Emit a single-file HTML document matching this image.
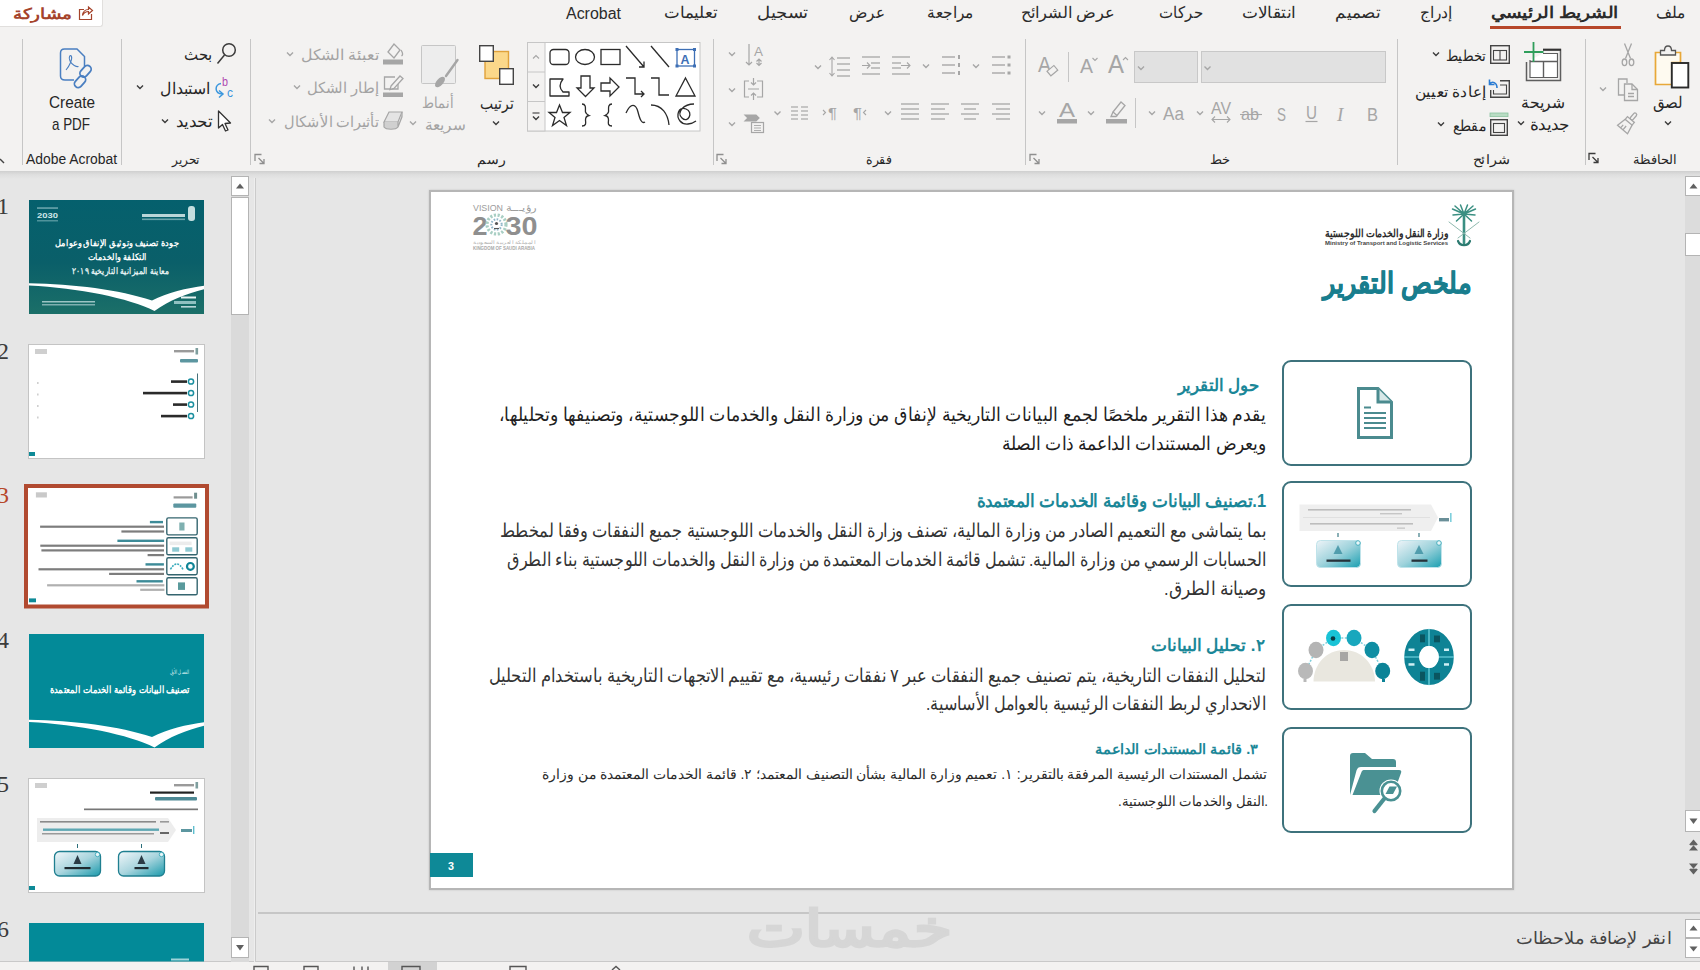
<!DOCTYPE html>
<html lang="ar"><head><meta charset="utf-8"><title>PowerPoint</title>
<style>
html,body{margin:0;padding:0}
body{width:1700px;height:970px;position:relative;overflow:hidden;background:#e6e6e6;font-family:"Liberation Sans",sans-serif;color:#262626}
div,svg{position:absolute;box-sizing:border-box}
svg{overflow:visible}
svg text{font-family:"Liberation Sans",sans-serif;white-space:pre}
.sep{width:1px;background:#c6c6c6}
.sec{left:0;top:0;width:0;height:0}
</style></head><body>
<!-- s_frame -->
<div class="sec" id="frame">
<div style="left:0px;top:0px;width:1700px;height:171px;background:#f3f2f1"></div>
<div style="left:0px;top:171px;width:1700px;height:8px;background:linear-gradient(#cfcfcf,#dedede 45%,#e6e6e6)"></div>
<div style="left:0px;top:961px;width:1700px;height:9px;background:#f3f2f1;border-top:1px solid #c9c9c9"></div>
</div>
<!-- s_tabs -->
<div class="sec" id="tabs">
<div style="left:0px;top:0px;width:103px;height:27px;background:#fff;border:1px solid #e1dfdd;border-left:none;border-top:none;border-radius:0 0 3px 0"></div>
<svg style="left:0px;top:0px" width="1700" height="32" viewBox="0 0 1700 32" ><text x="72" y="19" direction="rtl" font-size="15" fill="#a5432b" font-weight="bold" textLength="59" lengthAdjust="spacingAndGlyphs">مشاركة</text><g fill="none" stroke="#a5432b" stroke-width="1.2"><path d="M84 9.5H79.5V19.5H91.5V14"/><path d="M82.5 15.5C83 11.5 85.5 9.5 88.5 9.5V7L92.5 10.5L88.5 14V11.5C86 11.5 84 12.5 82.5 15.5Z"/></g><text x="1686" y="18" direction="rtl" font-size="15.5" fill="#2b2b2b" textLength="30" lengthAdjust="spacingAndGlyphs">ملف</text><text x="1618" y="18" direction="rtl" font-size="15.5" fill="#2b2b2b" font-weight="bold" textLength="127" lengthAdjust="spacingAndGlyphs">الشريط الرئيسي</text><text x="1452" y="18" direction="rtl" font-size="15.5" fill="#2b2b2b" textLength="32" lengthAdjust="spacingAndGlyphs">إدراج</text><text x="1380" y="18" direction="rtl" font-size="15.5" fill="#2b2b2b" textLength="45" lengthAdjust="spacingAndGlyphs">تصميم</text><text x="1295" y="18" direction="rtl" font-size="15.5" fill="#2b2b2b" textLength="53" lengthAdjust="spacingAndGlyphs">انتقالات</text><text x="1203" y="18" direction="rtl" font-size="15.5" fill="#2b2b2b" textLength="44" lengthAdjust="spacingAndGlyphs">حركات</text><text x="1115" y="18" direction="rtl" font-size="15.5" fill="#2b2b2b" textLength="94" lengthAdjust="spacingAndGlyphs">عرض الشرائح</text><text x="974" y="18" direction="rtl" font-size="15.5" fill="#2b2b2b" textLength="47" lengthAdjust="spacingAndGlyphs">مراجعة</text><text x="885" y="18" direction="rtl" font-size="15.5" fill="#2b2b2b" textLength="36" lengthAdjust="spacingAndGlyphs">عرض</text><text x="808" y="18" direction="rtl" font-size="15.5" fill="#2b2b2b" textLength="51" lengthAdjust="spacingAndGlyphs">تسجيل</text><text x="717" y="18" direction="rtl" font-size="15.5" fill="#2b2b2b" textLength="53" lengthAdjust="spacingAndGlyphs">تعليمات</text><text x="566" y="19" font-size="16" fill="#2b2b2b" textLength="55" lengthAdjust="spacingAndGlyphs">Acrobat</text></svg>
<div style="left:1490px;top:26px;width:131px;height:3px;background:#b7472a"></div>
</div>
<!-- s_ribbon -->
<div class="sec" id="ribbon">
<div class="sep" style="left:22px;top:39px;width:1px;height:126px;"></div>
<div class="sep" style="left:121px;top:39px;width:1px;height:126px;"></div>
<div class="sep" style="left:250px;top:39px;width:1px;height:126px;"></div>
<div class="sep" style="left:713px;top:39px;width:1px;height:126px;"></div>
<div class="sep" style="left:1025px;top:39px;width:1px;height:126px;"></div>
<div class="sep" style="left:1397px;top:39px;width:1px;height:126px;"></div>
<div class="sep" style="left:1585px;top:39px;width:1px;height:126px;"></div>
<svg style="left:0px;top:30px" width="1700" height="140" viewBox="0 30 1700 140" ><g id="clipboard"><g fill="none" stroke-width="1.7"><path d="M1660 52.5H1655.500V84.500H1672V62.500H1680.500V52.500H1676" stroke="#e8a838" fill="#fefaf0"/><path d="M1660.500 55V50.500H1664.500C1664.500 44.500 1671.500 44.500 1671.500 50.500H1675.500V55Z" stroke="#555" fill="#f3f2f1" stroke-width="1.3"/><rect x="1671.8" y="63" width="16.5" height="24.5" fill="#fff" stroke="#2b2b2b" stroke-width="1.9"/></g><text x="1683" y="108" direction="rtl" font-size="15.5" fill="#262626" textLength="30" lengthAdjust="spacingAndGlyphs">لصق</text><path d="M1665 121.5L1668 124.5L1671 121.5" fill="none" stroke="#3b3b3b" stroke-width="1.4"/><g fill="none" stroke="#a6a6a6" stroke-width="1.3"><path d="M1624.500 43.500L1630.500 58.500M1631.500 43.500L1625.500 58.500"/><ellipse cx="1624.500" cy="62.300" rx="2.300" ry="3.300"/><ellipse cx="1631.500" cy="62.300" rx="2.300" ry="3.300"/></g><g fill="none" stroke="#a6a6a6" stroke-width="1.3"><path d="M1624 95H1618.5V79H1627V83"/><path d="M1624.5 84H1632L1637.5 89.5V100.5H1624.5Z" fill="#f3f2f1"/><path d="M1632 84V89.5H1637.5M1628 93.5H1634M1628 96.5H1634"/></g><path d="M1600 87.5L1603 90.5L1606 87.5" fill="none" stroke="#a6a6a6" stroke-width="1.4"/><g fill="none" stroke="#a6a6a6" stroke-width="1.3" transform="rotate(40 1628 123)"><rect x="1626.300" y="110.500" width="3.400" height="8" rx="1.600"/><rect x="1623.500" y="118.500" width="9" height="3.500" fill="#f3f2f1"/><path d="M1623.500 122L1621.500 131.500H1634.500L1632.500 122M1625.500 131.500V127.500M1628.500 131.500V126.500"/></g><g fill="none" stroke="#3b3b3b" stroke-width="1.3"><path d="M1589 160.0V153.5H1595.5"/><path d="M1592.5 157.0L1598 162.5M1598 158.0V162.5H1593.5"/></g><text x="1677" y="164" direction="rtl" font-size="13" fill="#262626" textLength="44" lengthAdjust="spacingAndGlyphs">الحافظة</text></g><g id="slides"><g fill="none" stroke="#5e5e5e" stroke-width="1.5"><path d="M1543 49.5H1560.5V80.5H1526.5V62"/><path d="M1530 60V77.5H1557.5V53.500H1543" fill="#fff" stroke-width="1.2"/><path d="M1543.5 61.5V77.5M1530 61.500H1557.5" stroke-width="1.400"/><path d="M1543 49.800H1561" stroke="#333" stroke-width="2"/></g><path d="M1533.5 42V62M1524 52H1543.5" stroke="#2f9e5b" stroke-width="1.8" fill="none"/><text x="1565" y="108" direction="rtl" font-size="15.5" fill="#262626" textLength="44" lengthAdjust="spacingAndGlyphs">شريحة</text><text x="1570" y="130" direction="rtl" font-size="15.5" fill="#262626" textLength="40" lengthAdjust="spacingAndGlyphs">جديدة</text><path d="M1518 121.5L1521 124.5L1524 121.5" fill="none" stroke="#3b3b3b" stroke-width="1.4"/><g fill="none" stroke="#444" stroke-width="1.4"><rect x="1490.7" y="45.7" width="18.6" height="17.6"/><rect x="1493.5" y="50.5" width="13" height="9.5" stroke-width="1.1"/><path d="M1500 50.5V60" stroke-width="1.1"/></g><text x="1486" y="61" direction="rtl" font-size="15" fill="#262626" textLength="40" lengthAdjust="spacingAndGlyphs">تخطيط</text><path d="M1433 52.5L1436 55.5L1439 52.5" fill="none" stroke="#3b3b3b" stroke-width="1.4"/><g fill="none" stroke="#444" stroke-width="1.4"><path d="M1500 80.7H1509.3V97.3H1490.7V90"/><path d="M1493.5 90V94H1506.5V85H1500" stroke-width="1.1"/></g><path d="M1497 88C1497 82 1492 81 1490 84M1489.5 79.5V84.5H1494.5" fill="none" stroke="#2b7cd3" stroke-width="1.6"/><text x="1486" y="97" direction="rtl" font-size="15" fill="#262626" textLength="71" lengthAdjust="spacingAndGlyphs">إعادة تعيين</text><rect x="1490" y="113" width="18" height="3.6" fill="#b9dcc4" stroke="#8cc4a0" stroke-width=".8"/><g fill="none" stroke="#444" stroke-width="1.4"><rect x="1490.7" y="119.7" width="16.6" height="15.6"/><rect x="1493.5" y="123.5" width="11" height="9" stroke-width="1.1"/></g><text x="1486" y="131" direction="rtl" font-size="15" fill="#262626" textLength="33.5" lengthAdjust="spacingAndGlyphs">مقطع</text><path d="M1438 122.5L1441 125.5L1444 122.5" fill="none" stroke="#3b3b3b" stroke-width="1.4"/><text x="1510" y="164" direction="rtl" font-size="13" fill="#262626" textLength="37.5" lengthAdjust="spacingAndGlyphs">شرائح</text></g><g id="font"><rect x="1201.5" y="51.5" width="184" height="31" fill="#e1e1e1" stroke="#c8c8c8"/><rect x="1134.5" y="51.5" width="63" height="31" fill="#e1e1e1" stroke="#c8c8c8"/><path d="M1204.5 66.5L1207.5 69.5L1210.5 66.5" fill="none" stroke="#a6a6a6" stroke-width="1.4"/><path d="M1138 66.5L1141 69.5L1144 66.5" fill="none" stroke="#a6a6a6" stroke-width="1.4"/><text x="1108" y="73" font-size="25" fill="#a6a6a6" textLength="16" lengthAdjust="spacingAndGlyphs">A</text><path d="M1123 60L1125.5 57.5L1128 60" fill="none" stroke="#a6a6a6" stroke-width="1.1"/><text x="1080" y="73" font-size="21" fill="#a6a6a6" textLength="13" lengthAdjust="spacingAndGlyphs">A</text><path d="M1092.5 58L1095 60.5L1097.5 58" fill="none" stroke="#a6a6a6" stroke-width="1.1"/><path d="M1068.5 52V82" stroke="#c6c6c6"/><text x="1038" y="72" font-size="22" fill="#a6a6a6" textLength="13" lengthAdjust="spacingAndGlyphs">A</text><rect x="1048" y="68" width="9" height="6" fill="#f3f2f1" stroke="#a6a6a6" stroke-width="1.2" transform="rotate(-40 1052 71)"/><text x="1367" y="121" font-size="19" fill="#a6a6a6" textLength="11" lengthAdjust="spacingAndGlyphs">B</text><text x="1337" y="121" font-size="19" fill="#a6a6a6" style="font-style:italic;font-family:'Liberation Serif',serif">I</text><text x="1306" y="119" font-size="18" fill="#a6a6a6" textLength="11" lengthAdjust="spacingAndGlyphs">U</text><path d="M1305.5 121.5H1317.5" stroke="#a6a6a6" stroke-width="1.2"/><text x="1277" y="121" font-size="19" fill="#a6a6a6" textLength="9" lengthAdjust="spacingAndGlyphs">S</text><text x="1241" y="120" font-size="17" fill="#a6a6a6" textLength="18" lengthAdjust="spacingAndGlyphs">ab</text><path d="M1240 114.5H1262" stroke="#a6a6a6" stroke-width="1.1"/><text x="1211" y="114" font-size="16" fill="#a6a6a6" textLength="20" lengthAdjust="spacingAndGlyphs">AV</text><path d="M1212 119.5H1230M1215 116.5L1212 119.5L1215 122.5M1227 116.5L1230 119.5L1227 122.5" fill="none" stroke="#a6a6a6" stroke-width="1.1"/><path d="M1197 111.5L1200 114.5L1203 111.5" fill="none" stroke="#a6a6a6" stroke-width="1.4"/><text x="1163" y="120" font-size="18" fill="#a6a6a6" textLength="21" lengthAdjust="spacingAndGlyphs">Aa</text><path d="M1149 111.5L1152 114.5L1155 111.5" fill="none" stroke="#a6a6a6" stroke-width="1.4"/><path d="M1135.5 98V128" stroke="#c6c6c6"/><g fill="none" stroke="#a6a6a6" stroke-width="1.3"><path d="M1113 112L1121 102L1125 105.5L1117 115.5Z"/><path d="M1113 112L1111 116.5H1116L1117 115.5"/></g><rect x="1106" y="119" width="21" height="4.5" fill="#a6a6a6"/><path d="M1088 111.5L1091 114.5L1094 111.5" fill="none" stroke="#a6a6a6" stroke-width="1.4"/><text x="1059" y="117" font-size="20" fill="#a6a6a6" textLength="16" lengthAdjust="spacingAndGlyphs">A</text><rect x="1057" y="119" width="20" height="4.5" fill="#a6a6a6"/><path d="M1039 111.5L1042 114.5L1045 111.5" fill="none" stroke="#a6a6a6" stroke-width="1.4"/><text x="1230" y="164" direction="rtl" font-size="13" fill="#262626" textLength="20" lengthAdjust="spacingAndGlyphs">خط</text><g fill="none" stroke="#8f8f8f" stroke-width="1.3"><path d="M1030 161.0V154.5H1036.5"/><path d="M1033.5 158.0L1039 163.5M1039 159.0V163.5H1034.5"/></g></g><g id="para"><path d="M992 57H1005" stroke="#a6a6a6" stroke-width="1.4"/><path d="M992 65H1005" stroke="#a6a6a6" stroke-width="1.4"/><path d="M992 73H1005" stroke="#a6a6a6" stroke-width="1.4"/><rect x="1007.5" y="55.5" width="3" height="3" fill="#a6a6a6"/><rect x="1007.5" y="63.5" width="3" height="3" fill="#a6a6a6"/><rect x="1007.5" y="71.5" width="3" height="3" fill="#a6a6a6"/><path d="M973 64.5L976 67.5L979 64.5" fill="none" stroke="#a6a6a6" stroke-width="1.4"/><path d="M942 57H955" stroke="#a6a6a6" stroke-width="1.4"/><path d="M942 65H955" stroke="#a6a6a6" stroke-width="1.4"/><path d="M942 73H955" stroke="#a6a6a6" stroke-width="1.4"/><rect x="958" y="55" width="2" height="4" fill="#a6a6a6"/><rect x="958" y="63" width="2" height="4" fill="#a6a6a6"/><rect x="958" y="71" width="2" height="4" fill="#a6a6a6"/><path d="M923 64.5L926 67.5L929 64.5" fill="none" stroke="#a6a6a6" stroke-width="1.4"/><path d="M892 57H910" stroke="#a6a6a6" stroke-width="1.3"/><path d="M892 63H901" stroke="#a6a6a6" stroke-width="1.3"/><path d="M892 68H901" stroke="#a6a6a6" stroke-width="1.3"/><path d="M892 74H910" stroke="#a6a6a6" stroke-width="1.3"/><path d="M901 65.5H910M907 62.5L910 65.5L907 68.5" fill="none" stroke="#a6a6a6" stroke-width="1.1"/><path d="M862 57H880" stroke="#a6a6a6" stroke-width="1.3"/><path d="M871 63H880" stroke="#a6a6a6" stroke-width="1.3"/><path d="M871 68H880" stroke="#a6a6a6" stroke-width="1.3"/><path d="M862 74H880" stroke="#a6a6a6" stroke-width="1.3"/><path d="M862 65.5H870M867 62.5L870 65.5L867 68.5" fill="none" stroke="#a6a6a6" stroke-width="1.1"/><path d="M837 58H850" stroke="#a6a6a6" stroke-width="1.3"/><path d="M837 64H850" stroke="#a6a6a6" stroke-width="1.3"/><path d="M837 70H850" stroke="#a6a6a6" stroke-width="1.3"/><path d="M837 76H850" stroke="#a6a6a6" stroke-width="1.3"/><path d="M832 57V76M829.5 60L832 57L834.5 60M829.5 73L832 76L834.5 73" fill="none" stroke="#a6a6a6" stroke-width="1.1"/><path d="M815 65.5L818 68.5L821 65.5" fill="none" stroke="#a6a6a6" stroke-width="1.4"/><text x="754" y="56" font-size="13" fill="#a6a6a6" textLength="9" lengthAdjust="spacingAndGlyphs">A</text><path d="M749 44V65M746 62L749 65L752 62M759 59V65M756.5 61.5L759 59L761.5 61.5M756.5 63L759 65.5L761.5 63" fill="none" stroke="#a6a6a6" stroke-width="1.2"/><path d="M729 52.5L732 55.5L735 52.5" fill="none" stroke="#a6a6a6" stroke-width="1.4"/><g fill="none" stroke="#a6a6a6" stroke-width="1.2"><path d="M749 81H744.5V97H749M757 81H762.5V97H757"/><path d="M753.5 78V85M751 82.5L753.5 85L756 82.5M753.5 100V93M751 95.5L753.5 93L756 95.5M748 89H759"/></g><path d="M729 88.5L732 91.5L735 88.5" fill="none" stroke="#a6a6a6" stroke-width="1.4"/><g fill="none" stroke="#a6a6a6" stroke-width="1.2"><path d="M745 115H756L759 118L756 121H745L748 118Z" fill="#a6a6a6"/><rect x="751.5" y="122.5" width="12" height="10" fill="#f3f2f1"/><path d="M754 125.5H761M754 128H761M754 130.5H761" stroke-width=".9"/></g><path d="M729 122.5L732 125.5L735 122.5" fill="none" stroke="#a6a6a6" stroke-width="1.4"/><path d="M992 104H1010" stroke="#a6a6a6" stroke-width="1.3"/><path d="M996 109H1010" stroke="#a6a6a6" stroke-width="1.3"/><path d="M992 114H1010" stroke="#a6a6a6" stroke-width="1.3"/><path d="M996 119H1010" stroke="#a6a6a6" stroke-width="1.3"/><path d="M961 104H979" stroke="#a6a6a6" stroke-width="1.3"/><path d="M964 109H976" stroke="#a6a6a6" stroke-width="1.3"/><path d="M961 114H979" stroke="#a6a6a6" stroke-width="1.3"/><path d="M964 119H976" stroke="#a6a6a6" stroke-width="1.3"/><path d="M931 104H949" stroke="#a6a6a6" stroke-width="1.3"/><path d="M931 109H945" stroke="#a6a6a6" stroke-width="1.3"/><path d="M931 114H949" stroke="#a6a6a6" stroke-width="1.3"/><path d="M931 119H945" stroke="#a6a6a6" stroke-width="1.3"/><path d="M901 104H919" stroke="#a6a6a6" stroke-width="1.3"/><path d="M901 109H919" stroke="#a6a6a6" stroke-width="1.3"/><path d="M901 114H919" stroke="#a6a6a6" stroke-width="1.3"/><path d="M901 119H919" stroke="#a6a6a6" stroke-width="1.3"/><path d="M885 111.5L888 114.5L891 111.5" fill="none" stroke="#a6a6a6" stroke-width="1.4"/><text x="853" y="118" font-size="15" fill="#a6a6a6" textLength="9" lengthAdjust="spacingAndGlyphs">¶</text><path d="M866 110L863.5 112.5L866 115" fill="none" stroke="#a6a6a6" stroke-width="1.1"/><text x="828" y="118" font-size="15" fill="#a6a6a6" textLength="9" lengthAdjust="spacingAndGlyphs">¶</text><path d="M823 110L825.5 112.5L823 115" fill="none" stroke="#a6a6a6" stroke-width="1.1"/><path d="M791 107H798" stroke="#a6a6a6" stroke-width="1.2"/><path d="M791 111H798" stroke="#a6a6a6" stroke-width="1.2"/><path d="M791 115H798" stroke="#a6a6a6" stroke-width="1.2"/><path d="M791 119H798" stroke="#a6a6a6" stroke-width="1.2"/><path d="M801 107H808" stroke="#a6a6a6" stroke-width="1.2"/><path d="M801 111H808" stroke="#a6a6a6" stroke-width="1.2"/><path d="M801 115H808" stroke="#a6a6a6" stroke-width="1.2"/><path d="M801 119H808" stroke="#a6a6a6" stroke-width="1.2"/><path d="M774.5 111.5L777.5 114.5L780.5 111.5" fill="none" stroke="#a6a6a6" stroke-width="1.4"/><text x="892" y="164" direction="rtl" font-size="13" fill="#262626" textLength="26" lengthAdjust="spacingAndGlyphs">فقرة</text><g fill="none" stroke="#8f8f8f" stroke-width="1.3"><path d="M717 161.0V154.5H723.5"/><path d="M720.5 158.0L726 163.5M726 159.0V163.5H721.5"/></g></g><g id="drawing"><rect x="527.5" y="42.5" width="172.5" height="88.5" fill="#fff" stroke="#c6c6c6"/><rect x="527.5" y="42.5" width="17.5" height="88.5" fill="#f3f2f1" stroke="#c6c6c6"/><path d="M527.5 72H545M527.5 101.5H545" stroke="#c6c6c6"/><path d="M533 58.5L536 55.5L539 58.5" fill="none" stroke="#a6a6a6" stroke-width="1.1"/><path d="M533 84.5L536 87.5L539 84.5" fill="none" stroke="#3b3b3b" stroke-width="1.4"/><path d="M533 116.5L536 119.5L539 116.5" fill="none" stroke="#3b3b3b" stroke-width="1.4"/><path d="M532.5 113H539.5" stroke="#3b3b3b" stroke-width="1.1"/><g fill="none" stroke="#2b2b2b" stroke-width="1.3"><rect x="677" y="49.5" width="17.5" height="16.5" stroke="#3d6fb5" /><g fill="#3d6fb5" stroke="none"><rect x="675.5" y="48" width="3" height="3"/><rect x="693" y="48" width="3" height="3"/><rect x="675.5" y="64.5" width="3" height="3"/><rect x="693" y="64.5" width="3" height="3"/></g><path d="M651 46L669 67"/><path d="M626 46L644 67M644 61.5V67H639" /><rect x="601" y="49.5" width="19" height="15"/><ellipse cx="585" cy="57" rx="9.5" ry="7.5"/><rect x="550" y="49.5" width="19" height="15" rx="3.5"/><path d="M685.5 78L695 96H676Z"/><path d="M651 78H659V95H669"/><path d="M626 78H635V94H644M641 91L644 94L641 97"/><path d="M601 83H610V78L619 87L610 96V91H601Z"/><path d="M581 76H590V88H594L585.5 96.5L577 88H581Z"/><path d="M550 79H563C559 84 559 88 563 92H569V96H550Z" stroke-linejoin="round"/><path d="M694 104C684 104 676 112 682 118S694 112 686 109S676 116 680 121S692 124 696 121"/><path d="M651 105C662 105 668 114 669 125"/><path d="M626 113C631 102 636 104 638 112S642 124 645 122"/><path d="M612 104C607 104 609 110 608.5 112S606 115 605 115.5C608 116 608.5 118 608.5 120S607 126 612 126"/><path d="M582 104C587 104 585 110 585.5 112S588 115 589 115.5C586 116 585.5 118 585.5 120S587 126 582 126"/><path d="M559.5 105L562.5 112.5H570L564 117.5L566.5 125.5L559.5 120.5L552.5 125.5L555 117.5L549 112.5H556.5Z"/></g><text x="680.5" y="63.5" font-size="13" fill="#3d6fb5" font-weight="bold" textLength="9" lengthAdjust="spacingAndGlyphs">A</text><rect x="485" y="51.5" width="23.500" height="27" fill="#fbd88a" stroke="#e0a23b" stroke-width="1.4"/><rect x="479.7" y="45.7" width="13.6" height="15.6" fill="#fff" stroke="#444" stroke-width="1.4"/><rect x="499.7" y="68.7" width="13.6" height="15.6" fill="#fff" stroke="#444" stroke-width="1.4"/><text x="513" y="109" direction="rtl" font-size="15.5" fill="#262626" textLength="33" lengthAdjust="spacingAndGlyphs">ترتيب</text><path d="M493 121.5L496 124.5L499 121.5" fill="none" stroke="#3b3b3b" stroke-width="1.4"/><rect x="421.5" y="45.5" width="34" height="38" fill="#ededed" stroke="#c6c6c6" rx="1"/><path d="M457.500 60L446 76" stroke="#a6a6a6" stroke-width="2.400" stroke-linecap="round"/><ellipse cx="440" cy="82" rx="6.500" ry="3.300" fill="#a6a6a6" transform="rotate(-48 440 82)"/><text x="453" y="108" direction="rtl" font-size="15" fill="#a3a3a3" textLength="31" lengthAdjust="spacingAndGlyphs">أنماط</text><text x="466" y="130" direction="rtl" font-size="15" fill="#a3a3a3" textLength="41" lengthAdjust="spacingAndGlyphs">سريعة</text><path d="M410 121.5L413 124.5L416 121.5" fill="none" stroke="#a6a6a6" stroke-width="1.4"/><g fill="none" stroke="#a6a6a6" stroke-width="1.3"><path d="M388 52L394 44L400 50L394 58Z"/><path d="M401 50C403 53 403 55 401.5 56"/></g><rect x="383" y="59.5" width="20" height="5" fill="#a6a6a6"/><text x="379" y="60" direction="rtl" font-size="15" fill="#a3a3a3" textLength="78" lengthAdjust="spacingAndGlyphs">تعبئة الشكل</text><path d="M287 52.5L290 55.5L293 52.5" fill="none" stroke="#a6a6a6" stroke-width="1.4"/><g fill="none" stroke="#a6a6a6" stroke-width="1.3"><path d="M395 77H384.5V89H398V84"/><path d="M391 86L400 76L403 78.5L394 88.5L390 89.5Z" fill="#f3f2f1"/></g><rect x="383" y="92.5" width="20" height="4.5" fill="#a6a6a6"/><text x="379" y="93" direction="rtl" font-size="15" fill="#a3a3a3" textLength="72" lengthAdjust="spacingAndGlyphs">إطار الشكل</text><path d="M294 85.5L297 88.5L300 85.5" fill="none" stroke="#a6a6a6" stroke-width="1.4"/><g stroke="#a6a6a6" stroke-width="1.2"><path d="M384 122L389 112H402L398 122Z" fill="#e4e4e4"/><path d="M384 122V127C386 130 396 130 398 127V122M398 127L402 117V112" fill="#d0d0d0"/></g><text x="379" y="127" direction="rtl" font-size="15" fill="#a3a3a3" textLength="95" lengthAdjust="spacingAndGlyphs">تأثيرات الأشكال</text><path d="M269 119.5L272 122.5L275 119.5" fill="none" stroke="#a6a6a6" stroke-width="1.4"/><text x="505" y="164" direction="rtl" font-size="13" fill="#262626" textLength="28" lengthAdjust="spacingAndGlyphs">رسم</text><g fill="none" stroke="#8f8f8f" stroke-width="1.3"><path d="M255 161.0V154.5H261.5"/><path d="M258.5 158.0L264 163.5M264 159.0V163.5H259.5"/></g></g><g id="editing"><g fill="none" stroke="#3b3b3b" stroke-width="1.5"><circle cx="229" cy="50" r="6.3"/><path d="M224.5 55L217.5 63.5"/></g><text x="212" y="60" direction="rtl" font-size="15.5" fill="#262626" textLength="28" lengthAdjust="spacingAndGlyphs">بحث</text><text x="222" y="86" font-size="12" fill="#b04ab0" textLength="6" lengthAdjust="spacingAndGlyphs">b</text><text x="227" y="97" font-size="12" fill="#3a96dd" textLength="6" lengthAdjust="spacingAndGlyphs">c</text><path d="M221 83.500C214.500 84.500 214 93.500 222.500 94M219 90.500L223 94L219 97.500" fill="none" stroke="#3a96dd" stroke-width="1.5"/><text x="210" y="94" direction="rtl" font-size="15.5" fill="#262626" textLength="50" lengthAdjust="spacingAndGlyphs">استبدال</text><path d="M137 85.5L140 88.5L143 85.5" fill="none" stroke="#3b3b3b" stroke-width="1.4"/><path d="M218.5 111V128L222.5 124.5L225.5 131L228 130L225 123.5L230.5 123Z" fill="#fff" stroke="#333" stroke-width="1.3" stroke-linejoin="round"/><text x="212" y="127" direction="rtl" font-size="15.5" fill="#262626" textLength="36" lengthAdjust="spacingAndGlyphs">تحديد</text><path d="M162 119.5L165 122.5L168 119.5" fill="none" stroke="#3b3b3b" stroke-width="1.4"/><text x="200" y="164" direction="rtl" font-size="13" fill="#262626" textLength="28" lengthAdjust="spacingAndGlyphs">تحرير</text></g><g id="adobe"><g fill="none" stroke="#4a7fc1" stroke-width="1.5"><path d="M74 80H65C62 80 60.500 78.500 60.500 76V53C60.500 50.500 62 49 64.500 49H77L84.500 56.500V66"/><path d="M66 70C69.500 66 72.500 59 71.500 56.500S68 57 70 61S76.500 67 78.500 66.500" stroke-width="1.1"/><rect x="79" y="67.500" width="13" height="7.500" rx="3.700" transform="rotate(-48 85.500 71.200)" stroke-width="1.8"/><rect x="73.500" y="78" width="13" height="7.500" rx="3.700" transform="rotate(-48 80 81.700)" stroke-width="1.8"/></g><text x="49" y="108" font-size="17" fill="#262626" textLength="46" lengthAdjust="spacingAndGlyphs">Create</text><text x="52" y="130" font-size="17" fill="#262626" textLength="38" lengthAdjust="spacingAndGlyphs">a PDF</text><text x="26" y="164" font-size="14" fill="#262626" textLength="91" lengthAdjust="spacingAndGlyphs">Adobe Acrobat</text><path d="M0 159L4 163" stroke="#444" stroke-width="1.4"/></g></svg>
</div>
<!-- s_thumbs -->
<div class="sec" id="thumbs">
<div style="left:231px;top:176px;width:18px;height:786px;background:#dadada"></div>
<div style="left:231px;top:176px;width:18px;height:20px;background:#fff;border:1.5px solid #b4b4b4"></div>
<div style="left:231px;top:197px;width:18px;height:118px;background:#fff;border:1.5px solid #b4b4b4"></div>
<div style="left:231px;top:937px;width:18px;height:21px;background:#fff;border:1.5px solid #b4b4b4"></div>
<div style="left:254px;top:178px;width:1px;height:784px;background:#eeeeee"></div>
<div style="left:255px;top:178px;width:1px;height:784px;background:#cbcbcb"></div>
<svg style="left:0px;top:172px;overflow:hidden" width="260" height="790" viewBox="0 172 260 790"><path d="M236 188.5L240 183.5L244 188.5Z" fill="#606060"/><path d="M236 945L240 950.5L244 945Z" fill="#606060"/><text x="-3" y="214" font-size="24" fill="#3c3c3c" style="font-family:'Liberation Serif',serif">1</text><text x="-3" y="359" font-size="24" fill="#3c3c3c" style="font-family:'Liberation Serif',serif">2</text><text x="-3" y="648" font-size="24" fill="#3c3c3c" style="font-family:'Liberation Serif',serif">4</text><text x="-3" y="792" font-size="24" fill="#3c3c3c" style="font-family:'Liberation Serif',serif">5</text><text x="-3" y="937" font-size="24" fill="#3c3c3c" style="font-family:'Liberation Serif',serif">6</text><text x="-3" y="503" font-size="24" fill="#b7472a" style="font-family:'Liberation Serif',serif">3</text><defs><linearGradient id="g1" x1="0" y1="0" x2="0" y2="1"><stop offset="0" stop-color="#05606d"/><stop offset=".55" stop-color="#0a5f69"/><stop offset="1" stop-color="#1b6f68"/></linearGradient></defs><rect x="29" y="200" width="175" height="114" fill="url(#g1)"/><path d="M29.0 283.2C74.0 284.0 119.0 289.5 152.0 300.5C167.0 292.5 187.0 288.0 204.0 285.7L204.0 289.3C187.0 293.5 169.0 300.5 154.5 311.0C129.0 298.0 79.0 288.0 29.0 285.5Z" fill="#fff"/><text x="179" y="245.5" direction="rtl" font-size="8.5" fill="#fff" font-weight="bold" textLength="124" lengthAdjust="spacingAndGlyphs">جودة تصنيف وتوثيق الإنفاق وعوامل</text><text x="147" y="260" direction="rtl" font-size="8.5" fill="#fff" font-weight="bold" textLength="59" lengthAdjust="spacingAndGlyphs">التكلفة والخدمات</text><text x="169" y="273.5" direction="rtl" font-size="8.5" fill="#e6f3f3" font-weight="bold" textLength="97" lengthAdjust="spacingAndGlyphs">معاينة الميزانية التاريخية ٢٠١٩</text><rect x="37" y="207.3" width="21" height="1.5" fill="#6fa9b0"/><rect x="37" y="220" width="21" height="1.5" fill="#4f939b"/><text x="37" y="217.5" font-size="7.5" fill="#cfe6e8" font-weight="bold" textLength="21" lengthAdjust="spacingAndGlyphs">2030</text><rect x="142" y="214" width="43" height="3" fill="#b9d6d8"/><rect x="142" y="218.5" width="43" height="1.6" fill="#6aa5ab"/><rect x="188" y="206" width="7" height="15" rx="3" fill="#c2dedf"/><rect x="42" y="301" width="53" height="1.5" fill="#9cc4c4"/><rect x="42" y="304" width="53" height="1.5" fill="#7fb0b0"/><rect x="181" y="296.5" width="15" height="2" fill="#e8f3f3"/><rect x="174" y="301" width="22" height="3" fill="#8fc0c0"/><rect x="181" y="306" width="15" height="1.6" fill="#b9d6d8"/><rect x="28.5" y="344.5" width="176" height="114" fill="#fff" stroke="#c4c4c4"/><rect x="35" y="349" width="12" height="5" fill="#cfcfcf"/><rect x="174" y="350" width="20" height="2.4" fill="#9a9a9a"/><rect x="195.5" y="348" width="2.6" height="6.5" fill="#7f9f9f"/><rect x="180" y="359" width="18" height="3.6" fill="#5c96a0" rx="1"/><path d="M197.5 373.5V412" stroke="#46707a" stroke-width="1"/><circle cx="191" cy="381.5" r="2.6" fill="#fff" stroke="#1a8fa0" stroke-width="1.5"/><rect x="171" y="380.3" width="16" height="2.6" fill="#2a2a2a"/><rect x="37" y="382.0" width="1.6" height="2" fill="#cfcfcf"/><circle cx="191" cy="393" r="2.6" fill="#fff" stroke="#1a8fa0" stroke-width="1.5"/><rect x="143" y="391.8" width="44" height="2.6" fill="#2a2a2a"/><rect x="37" y="393.5" width="1.6" height="2" fill="#cfcfcf"/><circle cx="191" cy="404.5" r="2.6" fill="#fff" stroke="#1a8fa0" stroke-width="1.5"/><rect x="173" y="403.3" width="14" height="2.6" fill="#2a2a2a"/><rect x="37" y="405.0" width="1.6" height="2" fill="#cfcfcf"/><circle cx="191" cy="416" r="2.6" fill="#fff" stroke="#1a8fa0" stroke-width="1.5"/><rect x="161" y="414.8" width="26" height="2.6" fill="#2a2a2a"/><rect x="37" y="416.5" width="1.6" height="2" fill="#cfcfcf"/><rect x="29" y="452" width="6" height="4" fill="#0e8a97"/><rect x="26" y="486" width="181" height="120.5" fill="#fff" stroke="#b14a30" stroke-width="4"/><rect x="35.9" y="492.3" width="11" height="5.2" fill="#c9c9c9"/><rect x="173.6" y="496.3" width="19" height="2.2" fill="#9a9a9a"/><rect x="194.1" y="492.7" width="3" height="6" fill="#6f8f8f"/><rect x="173.3" y="503.5" width="23" height="4.2" fill="#5c96a0" rx="1"/><rect x="166.8" y="517.9" width="30.4" height="17.0" rx="1.6" fill="#fff" stroke="#34656f" stroke-width="1.4"/><rect x="166.8" y="537.8" width="30.4" height="17.0" rx="1.6" fill="#fff" stroke="#34656f" stroke-width="1.4"/><rect x="166.8" y="557.7" width="30.4" height="17.0" rx="1.6" fill="#fff" stroke="#34656f" stroke-width="1.4"/><rect x="166.8" y="577.8" width="30.4" height="17.0" rx="1.6" fill="#fff" stroke="#34656f" stroke-width="1.4"/><rect x="179.3" y="522.5" width="5.2" height="8" fill="#7fb0b0"/><rect x="172.2" y="547.3" width="7" height="4.4" fill="#8fc9d2"/><rect x="185.3" y="547.3" width="7" height="4.4" fill="#8fc9d2"/><rect x="169.6" y="541.6" width="22" height="3.5" fill="#ececec"/><circle cx="190.4" cy="566.4" r="3.4" fill="none" stroke="#0e8496" stroke-width="2.2"/><path d="M170.4 569.3Q176.9 558.7 183.0 569.3" fill="none" stroke="#35a9bb" stroke-width="1.6" stroke-dasharray="2 1"/><rect x="178.0" y="582.4" width="7" height="7.5" fill="#5a9a9c"/><rect x="149.9" y="520.9" width="13.1" height="2.4" fill="#3d8b98"/><rect x="40.1" y="525.6" width="123.9" height="2.2" fill="#7d7d7d"/><rect x="121.4" y="530.4" width="42.7" height="2.2" fill="#7d7d7d"/><rect x="117.4" y="539.6" width="46.7" height="2.4" fill="#3d8b98"/><rect x="40.3" y="544.6" width="123.8" height="2.2" fill="#7d7d7d"/><rect x="41.4" y="549.3" width="122.6" height="2.2" fill="#7d7d7d"/><rect x="147.6" y="554.0" width="16.5" height="2.2" fill="#7d7d7d"/><rect x="145.5" y="563.2" width="18.4" height="2.4" fill="#3d8b98"/><rect x="38.5" y="568.2" width="125.6" height="2.2" fill="#7d7d7d"/><rect x="109.1" y="572.8" width="54.9" height="2.2" fill="#7d7d7d"/><rect x="136.5" y="580.1" width="26.3" height="2.4" fill="#3d8b98"/><rect x="47.1" y="584.2" width="117.2" height="2.2" fill="#b0b0b0"/><rect x="140.2" y="588.7" width="24.2" height="2.2" fill="#b0b0b0"/><rect x="29.0" y="598.4" width="7" height="3.9" fill="#0e8a97"/><rect x="29" y="634" width="175" height="114" fill="#038a98"/><path d="M29.0 719.7C74.0 720.5 119.0 726.0 152.0 737.0C167.0 729.0 187.0 724.5 204.0 722.2L204.0 725.8C187.0 730.0 169.0 737.0 154.5 747.5C129.0 734.5 79.0 724.5 29.0 722.0Z" fill="#fff"/><text x="189" y="674" direction="rtl" font-size="5.5" fill="#d9eef0" textLength="19" lengthAdjust="spacingAndGlyphs">الفصل الأول</text><text x="190" y="692.5" direction="rtl" font-size="9.5" fill="#fff" font-weight="bold" textLength="140" lengthAdjust="spacingAndGlyphs">تصنيف البيانات وقائمة الخدمات المعتمدة</text><rect x="28.5" y="778.5" width="176" height="114" fill="#fff" stroke="#c4c4c4"/><rect x="35" y="783" width="12" height="5" fill="#cfcfcf"/><rect x="174" y="784" width="20" height="2.4" fill="#9a9a9a"/><rect x="195.5" y="782" width="2.6" height="6.5" fill="#7f9f9f"/><rect x="150" y="791.5" width="44" height="2.2" fill="#222"/><rect x="155" y="797" width="42" height="3.4" fill="#4d8894" rx="1"/><rect x="84" y="808.5" width="114" height="1.7" fill="#777"/><path d="M37 818H168L176 830L168 842H37Z" fill="#ededed"/><rect x="40" y="821" width="116" height="1.6" fill="#8a8a8a"/><rect x="43" y="828.5" width="116" height="2.4" fill="#5fa7b3"/><rect x="42" y="833" width="112" height="1.5" fill="#9a9a9a"/><rect x="160" y="821" width="9" height="1.6" fill="#999"/><rect x="160" y="832" width="9" height="2" fill="#666"/><rect x="181" y="829" width="11" height="3" fill="#5c96a0"/><rect x="193" y="826" width="1.4" height="8" fill="#5fbfcf"/><defs><linearGradient id="g5" x1="0" y1="0" x2="1" y2="1"><stop offset="0" stop-color="#f2f7fa"/><stop offset=".5" stop-color="#a9d5de"/><stop offset="1" stop-color="#1899ab"/></linearGradient></defs><rect x="54.5" y="851.5" width="46" height="24.5" rx="5" fill="url(#g5)" stroke="#1f7f90" stroke-width="1.3"/><circle cx="97.5" cy="854.5" r="2.2" fill="#e9f6f8" stroke="#2aa1b4" stroke-width=".8"/><path d="M73.5 864L77.5 855L81.5 864Z" fill="#2b3b45"/><rect x="64.5" y="867" width="26" height="2.2" fill="#1f2a30" transform="translate(0 0)"/><path d="M77.5 844V848" stroke="#2b6f7b" stroke-width="1"/><rect x="118.5" y="851.5" width="46" height="24.5" rx="5" fill="url(#g5)" stroke="#1f7f90" stroke-width="1.3"/><circle cx="161.5" cy="854.5" r="2.2" fill="#e9f6f8" stroke="#2aa1b4" stroke-width=".8"/><path d="M137.5 864L141.5 855L145.5 864Z" fill="#2b3b45"/><rect x="128.5" y="867" width="14" height="2.2" fill="#1f2a30" transform="translate(6 0)"/><path d="M141.5 844V848" stroke="#2b6f7b" stroke-width="1"/><rect x="29" y="886" width="6" height="4" fill="#0e8a97"/><rect x="29" y="923" width="175" height="38.5" fill="#038a98"/><rect x="171" y="958.5" width="18" height="2" fill="#9fd3d9"/></svg>
</div>
<!-- s_slide -->
<div class="sec" id="slide">
<div style="left:429px;top:190px;width:1085px;height:700px;background:#fff;border:2px solid #b6b6b6;box-shadow:0 0 2px rgba(0,0,0,.15)"></div>
<div style="left:1282px;top:360px;width:190px;height:105.5px;border:solid #3d727c;border-width:2.6px 2px 2.4px 2px;border-radius:9px;background:#fff"></div>
<div style="left:1282px;top:481px;width:190px;height:105.5px;border:solid #3d727c;border-width:2.6px 2px 2.4px 2px;border-radius:9px;background:#fff"></div>
<div style="left:1282px;top:604px;width:190px;height:105.5px;border:solid #3d727c;border-width:2.6px 2px 2.4px 2px;border-radius:9px;background:#fff"></div>
<div style="left:1282px;top:727px;width:190px;height:105.5px;border:solid #3d727c;border-width:2.6px 2px 2.4px 2px;border-radius:9px;background:#fff"></div>
<div style="left:430px;top:853px;width:43px;height:24px;background:#0e8997"></div>
<svg style="left:0px;top:0px" width="1700" height="970" viewBox="0 0 1700 970" ><text x="473" y="210.5" font-size="9.5" fill="#9b9b9b" textLength="30" lengthAdjust="spacingAndGlyphs">VISION</text><text x="537" y="210.5" direction="rtl" font-size="10" fill="#9b9b9b" textLength="31" lengthAdjust="spacingAndGlyphs">رؤيـــة</text><text x="472.5" y="234.5" font-size="25" fill="#8f8f8f" font-weight="bold" textLength="15" lengthAdjust="spacingAndGlyphs">2</text><text x="505.5" y="234.5" font-size="25" fill="#8f8f8f" font-weight="bold" textLength="32" lengthAdjust="spacingAndGlyphs">30</text><g><circle cx="496.5" cy="224.5" r="9.5" fill="none" stroke="#a9cfc4" stroke-width="3.2" stroke-dasharray="2.2 1.6"/><circle cx="496.5" cy="224.5" r="5.2" fill="none" stroke="#8fb7c9" stroke-width="2" stroke-dasharray="1.6 1.4"/><circle cx="496.5" cy="223.5" r="1.6" fill="#555"/><path d="M494 228.5H499" stroke="#555" stroke-width="1.1"/></g><text x="535" y="243.5" direction="rtl" font-size="5" fill="#b0b0b0" textLength="62" lengthAdjust="spacingAndGlyphs">المملكة العربية السعودية</text><text x="473" y="249.5" font-size="4.6" fill="#a8a8a8" font-weight="bold" textLength="62" lengthAdjust="spacingAndGlyphs">KINGDOM OF SAUDI ARABIA</text><text x="1448" y="236.5" direction="rtl" font-size="10.5" fill="#2d2d2d" font-weight="bold" textLength="123" lengthAdjust="spacingAndGlyphs">وزارة النقل والخدمات اللوجستية</text><text x="1325" y="245" font-size="5.6" fill="#444" font-weight="bold" textLength="123" lengthAdjust="spacingAndGlyphs">Ministry of Transport and Logistic Services</text><g fill="none" stroke="#3a8f82" stroke-linecap="round"><path d="M1464 214V243" stroke-width="2.6"/><path d="M1464 214L1452.5 209M1464 214L1475.500 209M1464 214L1455 206M1464 214L1473 206M1464 214L1460.500 205M1464 214L1467.500 205M1464 214L1453 215M1464 214L1475 215M1464 214L1456.500 221M1464 214L1471.500 221" stroke-width="1.5"/><path d="M1449 222L1470 238M1479 222L1458 238" stroke-width="1" stroke="#8fb9ae"/><path d="M1458 241C1460 246.500 1468 246.500 1470 241" stroke-width="2.2" stroke="#2c7a70"/></g><text x="1472" y="293" direction="rtl" font-size="29" fill="#197e8e" font-weight="bold" textLength="149" lengthAdjust="spacingAndGlyphs" stroke="#197e8e" stroke-width=".7">ملخص التقرير</text><text x="1259.5" y="391" direction="rtl" font-size="17" fill="#1b8798" font-weight="bold" textLength="82" lengthAdjust="spacingAndGlyphs">حول التقرير</text><text x="1266" y="421" direction="rtl" font-size="19" fill="#1f1f1f" textLength="767" lengthAdjust="spacingAndGlyphs">يقدم هذا التقرير ملخصًا لجمع البيانات التاريخية لإنفاق من وزارة النقل والخدمات اللوجستية، وتصنيفها وتحليلها،</text><text x="1266" y="450" direction="rtl" font-size="19" fill="#1f1f1f" textLength="264" lengthAdjust="spacingAndGlyphs">ويعرض المستندات الداعمة ذات الصلة</text><text x="1266" y="506.5" direction="rtl" font-size="17.5" fill="#1b8798" font-weight="bold" textLength="289.5" lengthAdjust="spacingAndGlyphs">1.تصنيف البيانات وقائمة الخدمات المعتمدة</text><text x="1266" y="537" direction="rtl" font-size="18.5" fill="#333" textLength="766" lengthAdjust="spacingAndGlyphs">بما يتماشى مع التعميم الصادر من وزارة المالية، تصنف وزارة النقل والخدمات اللوجستية جميع النفقات وفقا لمخطط</text><text x="1266" y="566" direction="rtl" font-size="18.5" fill="#333" textLength="759" lengthAdjust="spacingAndGlyphs">الحسابات الرسمي من وزارة المالية. تشمل قائمة الخدمات المعتمدة من وزارة النقل والخدمات اللوجستية بناء الطرق</text><text x="1266" y="595" direction="rtl" font-size="18.5" fill="#333" textLength="102" lengthAdjust="spacingAndGlyphs">وصيانة الطرق.</text><text x="1264.5" y="651" direction="rtl" font-size="17" fill="#1b8798" font-weight="bold" textLength="113.5" lengthAdjust="spacingAndGlyphs">٢. تحليل البيانات</text><text x="1266" y="682" direction="rtl" font-size="18.5" fill="#333" textLength="777" lengthAdjust="spacingAndGlyphs">لتحليل النفقات التاريخية، يتم تصنيف جميع النفقات عبر ٧ نفقات رئيسية، مع تقييم الاتجهات التاريخية باستخدام التحليل</text><text x="1266" y="710" direction="rtl" font-size="18.5" fill="#333" textLength="340" lengthAdjust="spacingAndGlyphs">الانحداري لربط النفقات الرئيسية بالعوامل الأساسية.</text><text x="1258.5" y="754" direction="rtl" font-size="14" fill="#1b8798" font-weight="bold" textLength="163.5" lengthAdjust="spacingAndGlyphs">٣. قائمة المستندات الداعمة</text><text x="1267" y="779" direction="rtl" font-size="14" fill="#2b2b2b" textLength="725" lengthAdjust="spacingAndGlyphs">تشمل المستندات الرئيسية المرفقة بالتقرير: ١. تعميم وزارة المالية بشأن التصنيف المعتمد؛ ٢. قائمة الخدمات المعتمدة من وزارة</text><text x="1268" y="805.5" direction="rtl" font-size="14" fill="#2b2b2b" textLength="150" lengthAdjust="spacingAndGlyphs">.النقل والخدمات اللوجستية.</text><text x="448" y="870" font-size="11" fill="#fff" font-weight="bold" textLength="6" lengthAdjust="spacingAndGlyphs">3</text><path d="M1358.5 388.5H1378L1391.500 402V437.500H1358.500Z" fill="#fff" stroke="#4b8b8f" stroke-width="3"/><path d="M1378 388.500V402H1391.500" fill="#d7e8e8" stroke="#4b8b8f" stroke-width="3"/><g stroke="#4b8b8f" stroke-width="2.2"><path d="M1364 407.500H1371M1364 413H1386M1364 418H1386M1364 423H1386M1364 428H1386"/></g><defs><linearGradient id="gb" x1="0" y1="0" x2="1" y2="1"><stop offset="0" stop-color="#eef4f8"/><stop offset=".5" stop-color="#9fd3dc"/><stop offset="1" stop-color="#1a9fb1"/></linearGradient></defs><path d="M1299.5 504.500H1431L1438 517.500L1431 531H1299.500Z" fill="#efefef"/><path d="M1303 517.500H1430" stroke="#dcdcdc" stroke-width=".8"/><rect x="1308" y="509" width="103" height="1.6" fill="#bdbdbd"/><rect x="1380" y="513" width="22" height="1.4" fill="#c6c6c6"/><rect x="1310" y="523" width="103" height="1.6" fill="#bdbdbd"/><rect x="1397" y="527.500" width="8" height="1.3" fill="#c6c6c6"/><rect x="1439" y="518" width="10" height="3.400" fill="#6a8f98"/><rect x="1450" y="513" width="1.600" height="9" fill="#7fcfdc"/><rect x="1316.5" y="540.500" width="44" height="27" rx="4" fill="url(#gb)" stroke="#bfe3ea" stroke-width="1"/><circle cx="1358.0" cy="543" r="2.300" fill="#eaf6f8" stroke="#3aa9ba" stroke-width=".9"/><path d="M1333.5 554L1338.0 545L1342.5 554Z" fill="#3b8fa0" opacity=".8"/><rect x="1326.5" y="559.500" width="24" height="2.300" fill="#26323a"/><path d="M1338.0 533V537" stroke="#2b6f7b" stroke-width="1.100"/><rect x="1397.5" y="540.500" width="44" height="27" rx="4" fill="url(#gb)" stroke="#bfe3ea" stroke-width="1"/><circle cx="1439.0" cy="543" r="2.300" fill="#eaf6f8" stroke="#3aa9ba" stroke-width=".9"/><path d="M1414.5 554L1419.0 545L1423.5 554Z" fill="#3b8fa0" opacity=".8"/><rect x="1411.5" y="559.500" width="16" height="2.300" fill="#26323a"/><path d="M1419.0 533V537" stroke="#2b6f7b" stroke-width="1.100"/><path d="M1313.5 681.500C1313.500 665 1326 650 1344 650S1375 665 1375 681.500Z" fill="#e9e7df"/><path d="M1305.5 671L1316 650L1333.500 638H1354L1372 650L1382.700 671" fill="none" stroke="#7fcfdc" stroke-width="1.500" stroke-dasharray="2 1.500"/><ellipse cx="1305.5" cy="671" rx="7.500" ry="8.300" fill="#b9b9b9"/><ellipse cx="1316" cy="650" rx="7.500" ry="8.300" fill="#b4b4b4"/><ellipse cx="1333.5" cy="638" rx="7.500" ry="8.300" fill="#19c3d6"/><ellipse cx="1354" cy="638" rx="7.500" ry="8.300" fill="#18a7bd"/><ellipse cx="1372" cy="650" rx="7.500" ry="8.300" fill="#0f8ea3"/><ellipse cx="1382.7" cy="671" rx="7.500" ry="8.300" fill="#0c8397"/><circle cx="1333" cy="638.500" r="2.300" fill="#0b3942"/><rect x="1340" y="652" width="8" height="9" fill="#8a8a8a" opacity=".7"/><rect x="1303.500" y="679" width="3" height="3" fill="#b9b9b9"/><rect x="1382" y="679" width="3" height="3" fill="#0c8397"/><g transform="translate(0 657) scale(1 1.13) translate(0 -657)"><circle cx="1429" cy="657" r="17.300" fill="none" stroke="#0e8395" stroke-width="15"/><path d="M1429 632V682M1404 657H1454" stroke="#7fe0ec" stroke-width="1.100"/><circle cx="1429" cy="657" r="9.800" fill="#fff"/><g fill="#cfeff4"><rect x="1408.500" y="649.500" width="6" height="2.200"/><rect x="1408.500" y="662.500" width="6" height="2.200"/><rect x="1444" y="649.500" width="5" height="2.200"/><rect x="1444" y="662.500" width="5" height="2.200"/></g><g fill="#0a5560"><rect x="1420" y="637" width="5" height="7"/><rect x="1434" y="638" width="6" height="6"/><rect x="1420" y="670" width="5" height="8"/><rect x="1434" y="671" width="6" height="6"/></g></g><path d="M1350 795V756C1350 754 1351 753 1353 753H1365L1372 759H1393C1395 759 1396 760 1396 762V767H1361C1358.500 767 1357.500 768 1356.500 770.500Z" fill="#4a9193"/><path d="M1352.500 795L1361.500 772C1362 770.500 1363 770 1364.500 770H1399C1401 770 1401.800 771.200 1401 773L1393 795Z" fill="#4a9193"/><circle cx="1391" cy="791" r="11.500" fill="#fff"/><circle cx="1391" cy="791" r="9.200" fill="#fff" stroke="#4a9193" stroke-width="2.600"/><path d="M1385.500 794L1389.500 786.500H1397L1393 794Z" fill="#4a9193"/><path d="M1384 799L1374.500 811" stroke="#4a9193" stroke-width="4.200" stroke-linecap="round"/></svg>
</div>
<!-- s_bottom -->
<div class="sec" id="bottom">
<div style="left:1685px;top:176px;width:15px;height:736px;background:#dcdcdc"></div>
<div style="left:1685px;top:176px;width:16px;height:20px;background:#fff;border:1.5px solid #b4b4b4"></div>
<div style="left:1685px;top:233px;width:16px;height:23px;background:#fff;border:1.5px solid #b4b4b4"></div>
<div style="left:1685px;top:810px;width:16px;height:22px;background:#fff;border:1.5px solid #b4b4b4"></div>
<div style="left:1685px;top:832px;width:15px;height:80px;background:#e6e6e6"></div>
<div style="left:258px;top:912px;width:1442px;height:1.5px;background:#c6c6c6"></div>
<div style="left:1685px;top:919px;width:16px;height:19px;background:#fff;border:1.5px solid #b4b4b4"></div>
<div style="left:1685px;top:938px;width:16px;height:20px;background:#fff;border:1.5px solid #b4b4b4"></div>
<svg style="left:0px;top:0px" width="1700" height="970" viewBox="0 0 1700 970" ><path d="M1689.500 188.5L1693.500 183.5L1697.500 188.500Z" fill="#606060"/><path d="M1689.500 818.500L1693.500 824L1697.500 818.500Z" fill="#606060"/><path d="M1689.500 930.500L1693.500 925.500L1697.500 930.500Z" fill="#606060"/><path d="M1689.500 946.500L1693.500 951.500L1697.500 946.500Z" fill="#606060"/><g fill="#606060"><path d="M1689 844.7L1693.500 839.5L1698 844.7Z"/><path d="M1689 850.5L1693.500 845.3L1698 850.5Z"/><path d="M1690 844.1H1697V845.3000000000001H1690Z"/></g><g fill="#606060"><path d="M1689 869.3L1693.500 874.5L1698 869.3Z"/><path d="M1689 863.5L1693.500 868.7L1698 863.5Z"/><path d="M1690 868.6999999999999H1697V869.9H1690Z"/></g><text x="1672" y="944" direction="rtl" font-size="17" fill="#444" textLength="156" lengthAdjust="spacingAndGlyphs">انقر لإضافة ملاحظات</text><text x="952" y="946" direction="rtl" font-size="50" fill="#d6d6d6" font-weight="bold" textLength="205" lengthAdjust="spacingAndGlyphs" stroke="#d6d6d6" stroke-width="1.5">خمسات</text><rect x="388" y="962" width="49" height="8" fill="#d2d2d2"/><g fill="none" stroke="#555" stroke-width="1.400"><path d="M254 970V966.500H268V970M304 970V966.500H318V970M354 970V966.500M362 970V966.500M368 970V966.500M402 970V966.500H420V970M510 970V966.500H526V970M612 970L616 966.500L620 970"/></g></svg>
</div>
</body></html>
